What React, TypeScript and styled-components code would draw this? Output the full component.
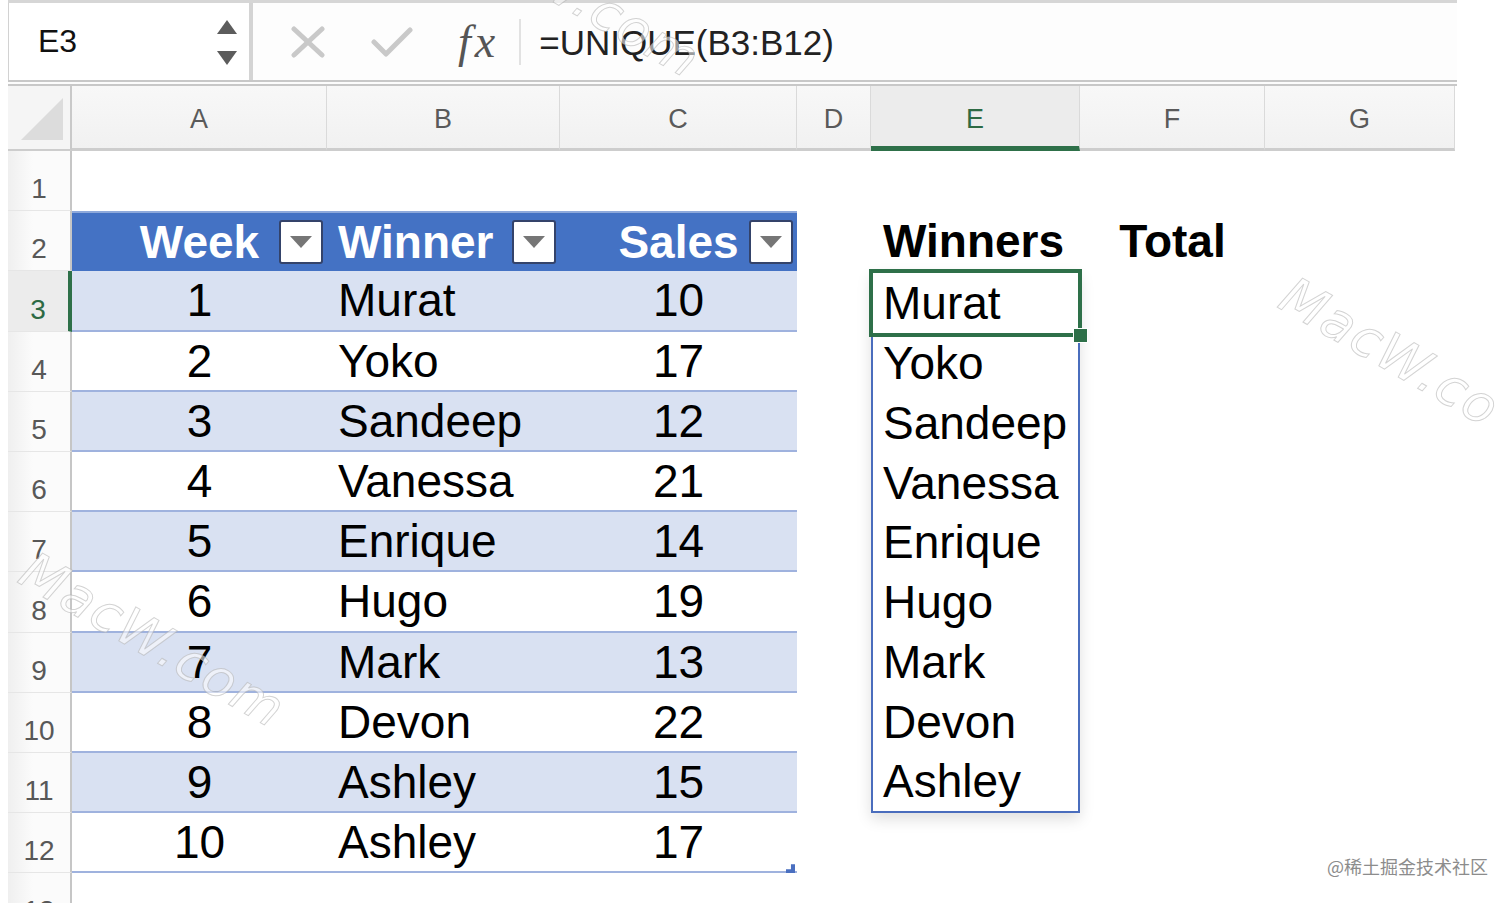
import React from "react";
import styled, { createGlobalStyle, css } from "styled-components";

const GlobalStyle = createGlobalStyle`
  html, body { margin: 0; padding: 0; background: #fff; }
  body { font-family: "Liberation Sans", Arial, sans-serif; overflow: hidden; }
  * { box-sizing: border-box; }
`;

const COLS = [255, 233, 237, 74, 209, 185, 190];
const LETTERS = ["A", "B", "C", "D", "E", "F", "G"];
const ROW_H = 60.2;

const Page = styled.div`
  position: relative;
  width: 1512px;
  height: 903px;
  overflow: hidden;
  background: #fff;
  padding-left: 8px;
`;

/* ---------- formula bar ---------- */
const TopBar = styled.div`
  display: flex;
  width: 1449px;
  height: 86px;
  border-top: 3px solid #d6d6d6;
  border-bottom: 6px double #c8c8c8;
  background: #fcfcfc;
`;

const NameBox = styled.div`
  width: 245px;
  height: 100%;
  display: flex;
  align-items: center;
  justify-content: space-between;
  padding: 0 12px 0 29px;
  background: #fff;
  border-left: 1px solid #d2d2d2;
  border-right: 4px solid #d4d4d4;
  font-size: 32px;
  color: #111;
`;

const Spinner = styled.div`
  display: flex;
  flex-direction: column;
  gap: 17px;
  margin-top: 2px;
`;

const FormulaArea = styled.div`
  flex: 1;
  display: flex;
  align-items: center;
  padding-left: 38px;
  background: #fdfdfd;
`;

const ToolIcon = styled.svg<{ $gap: number }>`
  flex: none;
  margin-right: ${(p) => p.$gap}px;
`;

const Fx = styled.span`
  font-family: "Liberation Serif", "DejaVu Serif", serif;
  font-style: italic;
  font-size: 46px;
  color: #555;
  margin-right: 20px;
  letter-spacing: 4px;
`;

const Separator = styled.div`
  width: 2px;
  height: 46px;
  background: #e2e2e2;
  margin-right: 18px;
`;

const FormulaText = styled.span`
  font-size: 35px;
  color: #222;
  margin-top: 2px;
`;

/* ---------- sheet grid ---------- */
const Sheet = styled.div`
  display: grid;
  grid-template-columns: 64px ${COLS.map((c) => `${c}px`).join(" ")};
  grid-template-rows: 65px repeat(13, ${ROW_H}px);
`;

const Corner = styled.div`
  grid-column: 1;
  grid-row: 1;
  display: flex;
  align-items: flex-end;
  justify-content: flex-end;
  padding: 0 7px 9px 0;
  background: #f5f5f5;
  border-right: 2px solid #c9c9c9;
  border-bottom: 2px solid #cdcdcd;
`;

const CornerTriangle = styled.div`
  width: 42px;
  height: 42px;
  background: #dcdcdc;
  clip-path: polygon(100% 0, 100% 100%, 0 100%);
`;

const ColHeader = styled.div<{ $selected?: boolean }>`
  grid-row: 1;
  display: flex;
  align-items: center;
  justify-content: center;
  padding-top: 5px;
  font-size: 27px;
  color: #5a5a5a;
  background: linear-gradient(#f8f8f8, #f1f1f1);
  border-right: 1px solid #dadada;
  border-bottom: 3px solid #cdcdcd;
  ${(p) =>
    p.$selected &&
    css`
      background: #ececec;
      color: #2d6a44;
      border-bottom: 5px solid #2e7049;
      padding-top: 7px;
    `}
`;

const RowHeader = styled.div<{ $row: number; $selected?: boolean }>`
  grid-column: 1;
  grid-row: ${(p) => p.$row + 1};
  display: flex;
  align-items: flex-end;
  justify-content: center;
  padding-bottom: 5px;
  font-size: 28px;
  color: #585858;
  background: linear-gradient(to right, #efefef, #fbfbfb 40%);
  border-right: 2px solid #c6c6c6;
  border-bottom: 1px solid #e6e6e6;
  ${(p) =>
    p.$selected &&
    css`
      background: #ececec;
      color: #2d6a44;
      border-right: 4px solid #2e7049;
    `}
`;

/* ---------- table ---------- */
const Table = styled.div`
  position: relative;
  grid-column: 2 / span 3;
  grid-row: 3 / span 11;
  display: grid;
  grid-template-columns: ${COLS[0]}px ${COLS[1]}px ${COLS[2]}px;
  grid-auto-rows: ${ROW_H}px;
  border-right: 2px solid #9fb2de;
  &::after {
    content: "";
    position: absolute;
    right: 0;
    bottom: 0;
    width: 9px;
    height: 9px;
    background: #4a6fc0;
    clip-path: polygon(100% 0, 100% 100%, 0 100%, 0 55%, 55% 55%, 55% 0);
  }
`;

type Align = "left" | "center";

const THead = styled.div<{ $align: Align }>`
  position: relative;
  display: flex;
  align-items: center;
  justify-content: ${(p) => (p.$align === "left" ? "flex-start" : "center")};
  padding-left: ${(p) => (p.$align === "left" ? "11px" : "0")};
  background: #4472c4;
  border-top: 2px solid #8ea9db;
  color: #fff;
  font-weight: 700;
  font-size: 46px;
`;

const Dropdown = styled.div`
  position: absolute;
  right: 4px;
  top: 7px;
  width: 44px;
  height: 44px;
  display: flex;
  align-items: center;
  justify-content: center;
  background: #fff;
  border: 2px solid #34436a;
  border-radius: 3px;
`;

const TCell = styled.div<{ $band: boolean; $align: Align }>`
  display: flex;
  align-items: center;
  justify-content: ${(p) => (p.$align === "left" ? "flex-start" : "center")};
  padding-left: ${(p) => (p.$align === "left" ? "11px" : "0")};
  background: ${(p) => (p.$band ? "#d9e1f2" : "#fff")};
  border-bottom: 2px solid #9fb2de;
  font-size: 46px;
  color: #000;
`;

/* ---------- winners ---------- */
const Title = styled.div<{ $col: number; $center?: boolean }>`
  grid-column: ${(p) => p.$col};
  grid-row: 3;
  display: flex;
  align-items: center;
  justify-content: ${(p) => (p.$center ? "center" : "flex-start")};
  padding-left: ${(p) => (p.$center ? "0" : "12px")};
  font-weight: 700;
  font-size: 46px;
  color: #000;
`;

const Spill = styled.div`
  grid-column: 6;
  grid-row: 4 / span 9;
  display: flex;
  flex-direction: column;
  border: 2px solid #4a6dbd;
  background: #fff;
  box-shadow: 0 6px 14px rgba(0, 0, 0, 0.13);
`;

const WinnerCell = styled.div<{ $selected?: boolean }>`
  position: relative;
  flex: 1;
  display: flex;
  align-items: center;
  padding-left: 10px;
  font-size: 46px;
  color: #000;
  ${(p) =>
    p.$selected &&
    css`
      z-index: 2;
      outline: 4px solid #2e7049;
      &::after {
        content: "";
        position: absolute;
        right: -10px;
        bottom: -10px;
        width: 13px;
        height: 13px;
        background: #2e7049;
        border: 1px solid #fff;
      }
    `}
`;

/* ---------- overlays ---------- */
const Watermark = styled.div<{ $x: number; $y: number }>`
  position: absolute;
  left: ${(p) => p.$x}px;
  top: ${(p) => p.$y}px;
  transform-origin: left top;
  transform: rotate(30deg);
  font-family: "DejaVu Sans", sans-serif;
  font-style: italic;
  font-size: 52px;
  letter-spacing: 2px;
  color: rgba(255, 255, 255, 0.55);
  -webkit-text-stroke: 1px rgba(175, 175, 175, 0.55);
  pointer-events: none;
  white-space: nowrap;
  z-index: 5;
`;

const Credit = styled.div`
  position: absolute;
  right: 24px;
  bottom: 24px;
  font-family: "Noto Sans CJK SC", "Noto Sans", sans-serif;
  font-size: 18px;
  color: #8c8c8c;
`;

const rows = [
  [1, "Murat", 10],
  [2, "Yoko", 17],
  [3, "Sandeep", 12],
  [4, "Vanessa", 21],
  [5, "Enrique", 14],
  [6, "Hugo", 19],
  [7, "Mark", 13],
  [8, "Devon", 22],
  [9, "Ashley", 15],
  [10, "Ashley", 17],
] as const;

const winners = ["Murat", "Yoko", "Sandeep", "Vanessa", "Enrique", "Hugo", "Mark", "Devon", "Ashley"];

const DropArrow = () => (
  <Dropdown>
    <svg width="22" height="12" viewBox="0 0 22 12">
      <polygon points="0,0 22,0 11,12" fill="#767676" />
    </svg>
  </Dropdown>
);

export default function App() {
  return (
    <Page>
      <GlobalStyle />
      <TopBar>
        <NameBox>
          <span>E3</span>
          <Spinner>
            <svg width="20" height="14" viewBox="0 0 20 14">
              <polygon points="10,0 20,14 0,14" fill="#5c5c5c" />
            </svg>
            <svg width="20" height="14" viewBox="0 0 20 14">
              <polygon points="0,0 20,0 10,14" fill="#5c5c5c" />
            </svg>
          </Spinner>
        </NameBox>
        <FormulaArea>
          <ToolIcon $gap={46} width="34" height="32" viewBox="0 0 34 32">
            <path d="M3 3 L31 29 M31 3 L3 29" stroke="#c9c9c9" strokeWidth="5" strokeLinecap="round" />
          </ToolIcon>
          <ToolIcon $gap={45} width="42" height="30" viewBox="0 0 42 30">
            <path d="M3 15 L15 27 L39 3" stroke="#c9c9c9" strokeWidth="5" fill="none" strokeLinecap="round" strokeLinejoin="round" />
          </ToolIcon>
          <Fx>fx</Fx>
          <Separator />
          <FormulaText>=UNIQUE(B3:B12)</FormulaText>
        </FormulaArea>
      </TopBar>

      <Sheet>
        <Corner>
          <CornerTriangle />
        </Corner>
        {LETTERS.map((l, i) => (
          <ColHeader key={l} $selected={l === "E"} style={{ gridColumn: i + 2 }}>
            {l}
          </ColHeader>
        ))}
        {Array.from({ length: 13 }, (_, i) => (
          <RowHeader key={i} $row={i + 1} $selected={i + 1 === 3}>
            {i + 1}
          </RowHeader>
        ))}

        <Table>
          <THead $align="center">
            Week
            <DropArrow />
          </THead>
          <THead $align="left">
            Winner
            <DropArrow />
          </THead>
          <THead $align="center">
            Sales
            <DropArrow />
          </THead>
          {rows.map(([w, name, s], i) => (
            <React.Fragment key={i}>
              <TCell $band={i % 2 === 0} $align="center">{w}</TCell>
              <TCell $band={i % 2 === 0} $align="left">{name}</TCell>
              <TCell $band={i % 2 === 0} $align="center">{s}</TCell>
            </React.Fragment>
          ))}
        </Table>

        <Title $col={6}>Winners</Title>
        <Title $col={7} $center>Total</Title>

        <Spill>
          {winners.map((n, i) => (
            <WinnerCell key={i} $selected={i === 0}>
              {n}
            </WinnerCell>
          ))}
        </Spill>
      </Sheet>

      <Watermark $x={40} $y={540}>MacW.com</Watermark>
      <Watermark $x={1300} $y={265}>MacW.co</Watermark>
      <Watermark $x={455} $y={-110}>MacW.com</Watermark>
      <Credit>@稀土掘金技术社区</Credit>
    </Page>
  );
}
